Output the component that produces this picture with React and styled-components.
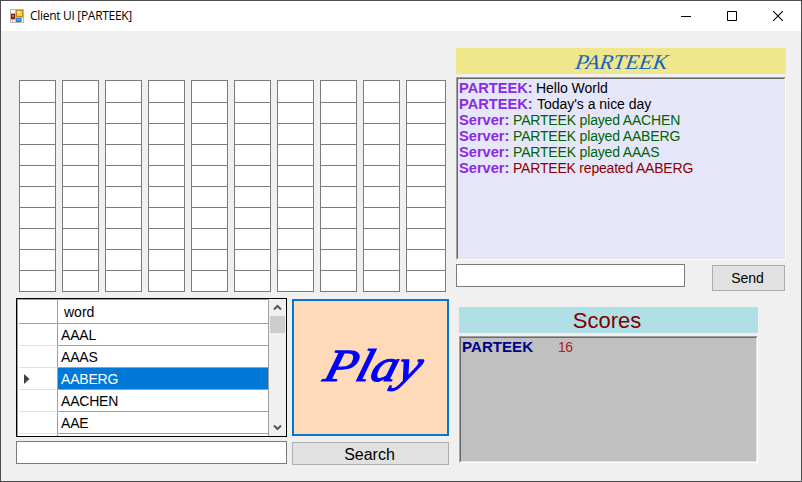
import React from "react";
import styled, { createGlobalStyle } from "styled-components";

const Reset = createGlobalStyle`
  * { box-sizing: border-box; }
  body { margin: 0; overflow: hidden; font-family: "Liberation Sans", Arial, sans-serif; }
`;

const Window = styled.main`
  width: 802px;
  height: 482px;
  display: flex;
  flex-direction: column;
  background: #f0f0f0;
  border: 1px solid #4d4d4f;
  color: #000;
`;

const TitleBar = styled.header`
  height: 30px;
  flex: none;
  display: flex;
  align-items: center;
  background: #fff;
  padding-left: 9px;
`;

const Title = styled.h1`
  margin: 0 auto 0 6px;
  font: 400 12px/16px "Open Sans", "Noto Sans", sans-serif;
  letter-spacing: ${(p) => p.$spacing}px;
  white-space: nowrap;
`;

const CaptionButton = styled.button`
  width: 46px;
  height: 29px;
  padding: 0;
  border: 0;
  background: none;
  display: grid;
  place-items: center;
`;

const Client = styled.div`
  flex: 1;
  display: grid;
  grid-template-columns: 433px 330px;
  column-gap: 7px;
  padding: 17px 0 0 15px;
`;

const LeftPane = styled.section`
  padding-top: 32px;
`;

const RightPane = styled.section`
  display: flex;
  flex-direction: column;
`;

const Board = styled.div`
  display: grid;
  grid-template-columns: repeat(9, 37px) 40px;
  column-gap: 6px;
  margin-left: 3px;
`;

const BoardColumn = styled.div`
  border: 1px solid #7a7a7a;
  background: #fff;
`;

const Tile = styled.div`
  height: ${(p) => (p.$first ? 22 : 21)}px;
  border-bottom: 1px solid #7a7a7a;
  &:last-child { height: 20px; border-bottom: 0; }
`;

const Controls = styled.div`
  display: grid;
  grid-template-columns: 271px 157px;
  column-gap: 5px;
  margin-top: 6px;
`;

const Stack = styled.div`
  display: flex;
  flex-direction: column;
  padding-top: ${(p) => p.$top || 0}px;
`;

const WordTable = styled.div`
  height: 139px;
  display: flex;
  border: 1px solid #000;
  background: #fff;
  overflow: hidden;
`;

const Rows = styled.div`
  flex: none;
  width: 252px;
  border-top: 1px solid #a0a0a0;
  border-left: 1px solid #a0a0a0;
  border-right: 1px solid #a0a0a0;
  overflow: hidden;
`;

const Row = styled.div`
  height: ${(p) => (p.$header ? 24 : 22)}px;
  display: grid;
  grid-template-columns: 40px 1fr;
  grid-template-rows: 100%;
`;

const RowHead = styled.div`
  display: flex;
  align-items: center;
  padding-left: 5px;
  margin-left: 1px;
  border-right: 1px solid #a0a0a0;
  border-bottom: 1px solid ${(p) => (p.$header ? "#a0a0a0" : "#e3e3e3")};
`;

const Word = styled.div`
  padding-left: ${(p) => (p.$header ? 6 : 3)}px;
  font-size: 14px;
  line-height: ${(p) => (p.$header ? 25 : 23)}px;
  letter-spacing: ${(p) => (p.$header ? 0 : -0.2)}px;
  border-bottom: 1px solid #a0a0a0;
  background: ${(p) => (p.$selected ? "#0078d7" : "#fff")};
  color: ${(p) => (p.$selected ? "#fff" : "#000")};
`;

const ScrollBar = styled.div`
  flex: none;
  width: 17px;
  background: #f0f0f0;
  display: flex;
  flex-direction: column;
  align-items: center;
`;

const ScrollArrow = styled.div`
  height: 17px;
  display: grid;
  place-items: center;
`;

const Thumb = styled.div`
  width: 15px;
  height: 17px;
  margin-bottom: auto;
  background: #cdcdcd;
`;

const TextField = styled.input`
  display: block;
  width: ${(p) => p.$width}px;
  height: 23px;
  margin-top: 4px;
  border: 1px solid #7a7a7a;
  background: #fff;
  padding: 0 3px;
  outline: 0;
`;

const PlayButton = styled.button`
  height: 137px;
  padding: 0;
  border: 2px solid #0078d7;
  background: #ffdab9;
  color: #0000ff;
`;

const PlayLabel = styled.span`
  display: inline-block;
  font: italic 400 46px/50px "Liberation Serif", serif;
  -webkit-text-stroke: 1.2px #0000ff;
  transform: translate(4px, -2px) scaleX(1.14) skewX(-14deg);
`;

const GreyButton = styled.button`
  width: ${(p) => p.$width}px;
  height: ${(p) => p.$height}px;
  margin-top: ${(p) => p.$top}px;
  padding: ${(p) => p.$padding};
  border: 1px solid #adadad;
  background: #e1e1e1;
  color: #000;
  font: ${(p) => p.$size}px/18px "Liberation Sans", Arial, sans-serif;
`;

const Banner = styled.h2`
  width: ${(p) => p.$width}px;
  height: 26px;
  margin: ${(p) => p.$margin || 0};
  padding-right: ${(p) => p.$shift || 0}px;
  text-align: center;
  background: ${(p) => p.$bg};
  color: ${(p) => p.$color};
  font: 400 22px/27px "Liberation Sans", Arial, sans-serif;
`;

const ScriptName = styled.span`
  display: inline-block;
  font: italic 400 21px/27px "Liberation Serif", serif;
  transform: translateX(1px) scaleX(1.06) skewX(-8deg);
`;

const SunkenBox = styled.div`
  width: ${(p) => p.$width}px;
  height: ${(p) => p.$height}px;
  margin: 3px 0 0 ${(p) => p.$left || 0}px;
  border: 1px solid;
  border-color: #a0a0a0 #fff #fff #a0a0a0;
`;

const SunkenInner = styled.div`
  height: 100%;
  border: 1px solid;
  border-color: #696969 #e3e3e3 #e3e3e3 #696969;
  background: ${(p) => p.$bg};
  padding: 1px;
  font-size: 14px;
  line-height: 16px;
`;

const Line = styled.div`
  height: 16px;
  display: flex;
  white-space: pre;
  color: ${(p) => p.$color};
  letter-spacing: ${(p) => p.$spacing}px;
`;

const Speaker = styled.b`
  width: ${(p) => p.$width}px;
  color: ${(p) => p.$color};
`;

const SpeakerName = styled.span`
  display: inline-block;
  letter-spacing: 0;
  transform: scaleX(${(p) => p.$stretch});
  transform-origin: left;
`;

const SendRow = styled.div`
  display: flex;
  gap: 27px;
`;

const words = ["AAAL", "AAAS", "AABERG", "AACHEN", "AAE", ""];
const messages = [
  ["PARTEEK:", "Hello World", "#000", 77, -0.03],
  ["PARTEEK:", "Today's a nice day", "#000", 78, -0.03],
  ["Server:", "PARTEEK played AACHEN", "#006400", 54, -0.17],
  ["Server:", "PARTEEK played AABERG", "#006400", 54, -0.17],
  ["Server:", "PARTEEK played AAAS", "#006400", 54, -0.17],
  ["Server:", "PARTEEK repeated AABERG", "#8b0000", 54, -0.2],
];

function AppIcon() {
  return (
    <svg width="14" height="14" viewBox="0 0 14 14" shapeRendering="crispEdges">
      <path fill="#b8b8b8" d="M0 0h14v14H0z" />
      <path fill="#fff" d="M1 1h4v3H1zM1 11h1v2H1zM3 11h2v2H3zM12 9h1v4h-1z" />
      <path fill="#c28a12" d="M6 1h7v7H6z" />
      <path fill="#ffd34d" d="M7 2h5v5H7z" />
      <path fill="#ffeaa0" d="M7 2h3v2H7z" />
      <path fill="#8d1d13" d="M1 5h4v5H1z" />
      <path fill="#d66a5b" d="M2 6h2v2H2z" />
      <path fill="#2f7bd6" d="M6 9h5v4H6z" />
      <path fill="#7dbcf5" d="M7 10h3v1H7z" />
    </svg>
  );
}

function Chevron({ down }) {
  return (
    <svg width="9" height="7" viewBox="0 0 9 7">
      <path d={down ? "M1 1.5l3.5 3.5L8 1.5" : "M1 5.5L4.5 2 8 5.5"} fill="none" stroke="#555" strokeWidth="2" />
    </svg>
  );
}

export default function App() {
  return (
    <>
      <Reset />
      <Window>
        <TitleBar>
          <AppIcon />
          <Title $spacing={-0.3}>Client UI [PARTEEK]</Title>
          <CaptionButton aria-label="Minimize">
            <svg width="10" height="10"><path d="M0 5.5h10" stroke="#000" /></svg>
          </CaptionButton>
          <CaptionButton aria-label="Maximize">
            <svg width="10" height="10"><path d="M.5.5h9v9h-9z" fill="none" stroke="#000" /></svg>
          </CaptionButton>
          <CaptionButton aria-label="Close">
            <svg width="10" height="10"><path d="M0 0l10 10M10 0L0 10" stroke="#000" strokeWidth="1.1" /></svg>
          </CaptionButton>
        </TitleBar>
        <Client>
          <LeftPane>
            <Board>
              {Array.from({ length: 10 }, (_, c) => (
                <BoardColumn key={c}>
                  {Array.from({ length: 10 }, (_, r) => <Tile key={r} $first={r === 0} />)}
                </BoardColumn>
              ))}
            </Board>
            <Controls>
              <Stack>
                <WordTable>
                  <Rows>
                    <Row $header><RowHead $header /><Word $header>word</Word></Row>
                    {words.map((word, i) => (
                      <Row key={i}>
                        <RowHead>
                          {i === 2 && <svg width="6" height="10"><path d="M0 0l5.5 5L0 10z" fill="#404040" /></svg>}
                        </RowHead>
                        <Word $selected={i === 2}>{word}</Word>
                      </Row>
                    ))}
                  </Rows>
                  <ScrollBar>
                    <ScrollArrow><Chevron /></ScrollArrow>
                    <Thumb />
                    <ScrollArrow><Chevron down /></ScrollArrow>
                  </ScrollBar>
                </WordTable>
                <TextField $width={271} aria-label="Search word" />
              </Stack>
              <Stack $top={1}>
                <PlayButton><PlayLabel>Play</PlayLabel></PlayButton>
                <GreyButton $width={157} $height={23} $top={6} $size={16} $padding="3px 2px 0 0">Search</GreyButton>
              </Stack>
            </Controls>
          </LeftPane>
          <RightPane>
            <Banner $width={330} $bg="#f0e68c" $color="#1565c0"><ScriptName>PARTEEK</ScriptName></Banner>
            <SunkenBox $width={330} $height={183}>
              <SunkenInner $bg="#e6e6fa">
                {messages.map(([who, text, color, width, spacing], i) => (
                  <Line key={i} $color={color} $spacing={spacing}>
                    <Speaker $color="#8a2be2" $width={width}>
                      <SpeakerName $stretch={1.045}>{who}</SpeakerName>
                    </Speaker>
                    {text}
                  </Line>
                ))}
              </SunkenInner>
            </SunkenBox>
            <SendRow>
              <TextField $width={229} aria-label="Message" />
              <GreyButton $width={73} $height={26} $top={5} $size={14} $padding="0 2px 0 0">Send</GreyButton>
            </SendRow>
            <Banner $width={299} $margin="16px 0 0 3px" $shift={3} $bg="#b0e0e6" $color="#800000">Scores</Banner>
            <SunkenBox $width={299} $height={127} $left={3}>
              <SunkenInner $bg="#c0c0c0">
                <Line $color="#b22222" $spacing={-0.5}>
                  <Speaker $color="#00008b" $width={96}>
                    <SpeakerName $stretch={1.08}>PARTEEK</SpeakerName>
                  </Speaker>
                  16
                </Line>
              </SunkenInner>
            </SunkenBox>
          </RightPane>
        </Client>
      </Window>
    </>
  );
}
